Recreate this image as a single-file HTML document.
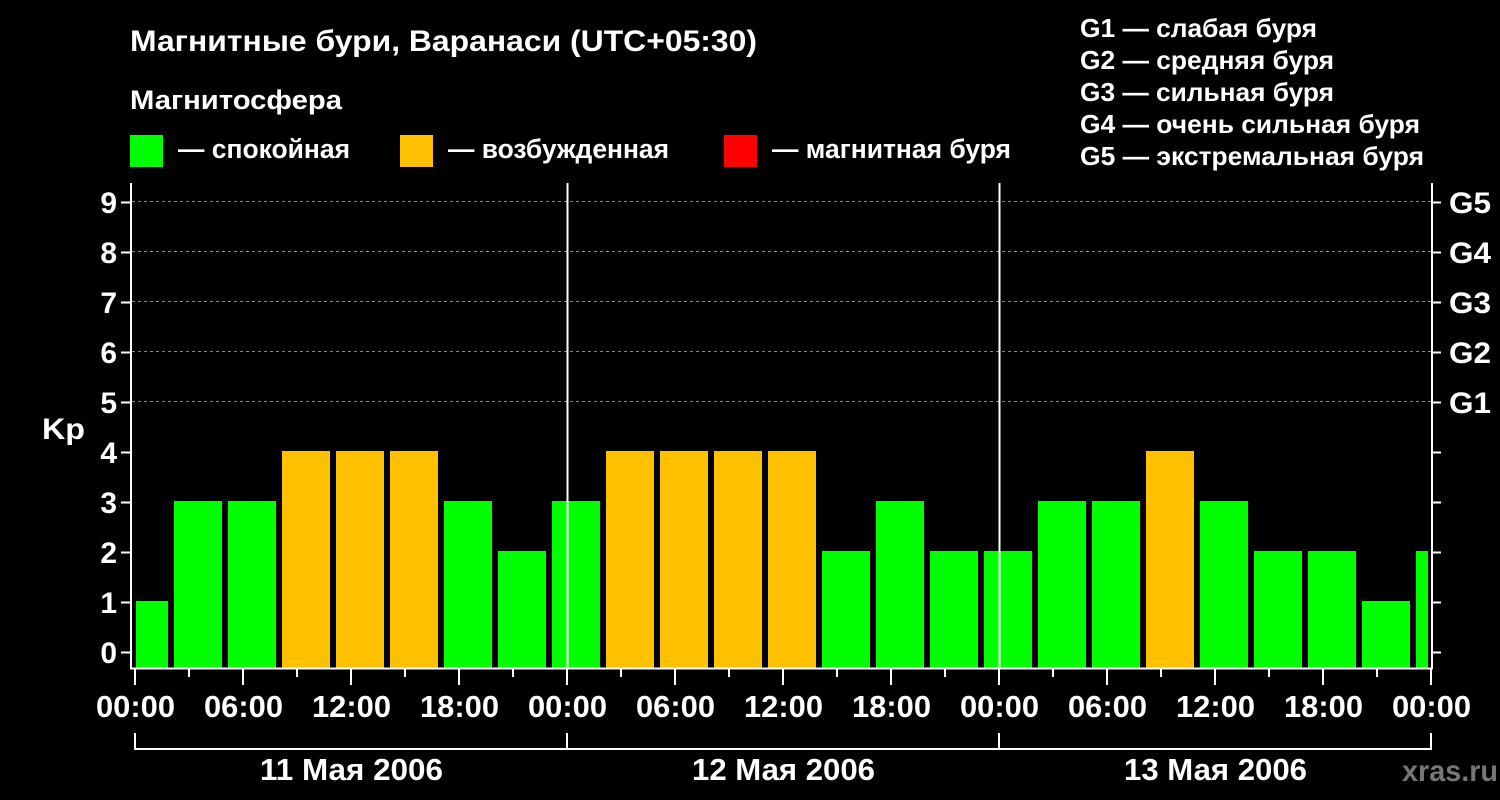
<!DOCTYPE html>
<html><head><meta charset="utf-8"><style>
html,body{margin:0;padding:0;background:#000;width:1500px;height:800px;overflow:hidden}
svg text{font-family:"Liberation Sans",Arial,sans-serif;font-weight:bold;fill:#fff}
</style></head><body>
<svg width="1500" height="800" xmlns="http://www.w3.org/2000/svg">
<rect width="1500" height="800" fill="#000"/>
<text x="130" y="51" font-size="30" textLength="627" lengthAdjust="spacingAndGlyphs">Магнитные бури, Варанаси (UTC+05:30)</text>
<text x="130" y="109" font-size="27" textLength="212" lengthAdjust="spacingAndGlyphs">Магнитосфера</text>
<rect x="130" y="135" width="33" height="32" fill="#00ff00"/>
<text x="178" y="158" font-size="27" textLength="172" lengthAdjust="spacingAndGlyphs">— спокойная</text>
<rect x="400" y="135" width="33" height="32" fill="#ffc000"/>
<text x="448" y="158" font-size="27" textLength="221" lengthAdjust="spacingAndGlyphs">— возбужденная</text>
<rect x="724" y="135" width="33" height="32" fill="#ff0000"/>
<text x="772" y="158" font-size="27" textLength="239" lengthAdjust="spacingAndGlyphs">— магнитная буря</text>
<g font-size="26">
<text x="1080" y="37" textLength="237" lengthAdjust="spacingAndGlyphs">G1 — слабая буря</text>
<text x="1080" y="69" textLength="254" lengthAdjust="spacingAndGlyphs">G2 — средняя буря</text>
<text x="1080" y="101" textLength="254" lengthAdjust="spacingAndGlyphs">G3 — сильная буря</text>
<text x="1080" y="133" textLength="340" lengthAdjust="spacingAndGlyphs">G4 — очень сильная буря</text>
<text x="1080" y="165" textLength="344" lengthAdjust="spacingAndGlyphs">G5 — экстремальная буря</text>
</g>
<g stroke="#888" stroke-width="1" stroke-dasharray="3,3">
<line x1="132" y1="201.5" x2="1432" y2="201.5"/>
<line x1="132" y1="251.5" x2="1432" y2="251.5"/>
<line x1="132" y1="301.5" x2="1432" y2="301.5"/>
<line x1="132" y1="351.5" x2="1432" y2="351.5"/>
<line x1="132" y1="401.5" x2="1432" y2="401.5"/>
</g>
<g fill="#00ff00">
<rect x="136" y="601" width="32" height="67"/>
<rect x="174" y="501" width="48" height="167"/>
<rect x="228" y="501" width="48" height="167"/>
<rect x="444" y="501" width="48" height="167"/>
<rect x="498" y="551" width="48" height="117"/>
<rect x="552" y="501" width="48" height="167"/>
<rect x="822" y="551" width="48" height="117"/>
<rect x="876" y="501" width="48" height="167"/>
<rect x="930" y="551" width="48" height="117"/>
<rect x="984" y="551" width="48" height="117"/>
<rect x="1038" y="501" width="48" height="167"/>
<rect x="1092" y="501" width="48" height="167"/>
<rect x="1200" y="501" width="48" height="167"/>
<rect x="1254" y="551" width="48" height="117"/>
<rect x="1308" y="551" width="48" height="117"/>
<rect x="1362" y="601" width="48" height="67"/>
<rect x="1416" y="551" width="12" height="117"/>
</g>
<g fill="#ffc000">
<rect x="282" y="451" width="48" height="217"/>
<rect x="336" y="451" width="48" height="217"/>
<rect x="390" y="451" width="48" height="217"/>
<rect x="606" y="451" width="48" height="217"/>
<rect x="660" y="451" width="48" height="217"/>
<rect x="714" y="451" width="48" height="217"/>
<rect x="768" y="451" width="48" height="217"/>
<rect x="1146" y="451" width="48" height="217"/>
</g>
<line x1="567.5" y1="183" x2="567.5" y2="668" stroke="#fff" stroke-width="2"/>
<line x1="999.5" y1="183" x2="999.5" y2="668" stroke="#fff" stroke-width="2"/>
<line x1="131" y1="183" x2="131" y2="669" stroke="#fff" stroke-width="2"/>
<line x1="1432" y1="183" x2="1432" y2="669" stroke="#fff" stroke-width="2"/>
<line x1="130" y1="668.5" x2="1433" y2="668.5" stroke="#fff" stroke-width="2"/>
<g stroke="#fff" stroke-width="2">
<path d="M121 202.5H131M121 252.5H131M121 302.5H131M121 352.5H131M121 402.5H131M121 452.5H131M121 502.5H131M121 552.5H131M121 602.5H131M121 652.5H131"/>
<path d="M1432 202.5H1441M1432 252.5H1441M1432 302.5H1441M1432 352.5H1441M1432 402.5H1441M1432 452.5H1441M1432 502.5H1441M1432 552.5H1441M1432 602.5H1441M1432 652.5H1441"/>
<path d="M135 669V685M243 669V685M351 669V685M459 669V685M567 669V685M675 669V685M783 669V685M891 669V685M999 669V685M1107 669V685M1215 669V685M1323 669V685M1431 669V685"/>
<path d="M189 669V677M297 669V677M405 669V677M513 669V677M621 669V677M729 669V677M837 669V677M945 669V677M1053 669V677M1161 669V677M1269 669V677M1377 669V677"/>
<path d="M135 733V749M567 733V749M999 733V749M1431 733V749M134 749H1432"/>
</g>
<g font-size="30" text-anchor="end">
<text x="117" y="213">9</text><text x="117" y="263">8</text><text x="117" y="313">7</text>
<text x="117" y="363">6</text><text x="117" y="413">5</text><text x="117" y="463">4</text>
<text x="117" y="513">3</text><text x="117" y="563">2</text><text x="117" y="613">1</text>
<text x="117" y="663">0</text>
</g>
<text x="42" y="439" font-size="30" textLength="43" lengthAdjust="spacingAndGlyphs">Kp</text>
<g font-size="30">
<text x="1449" y="213" textLength="42" lengthAdjust="spacingAndGlyphs">G5</text><text x="1449" y="263" textLength="42" lengthAdjust="spacingAndGlyphs">G4</text><text x="1449" y="313" textLength="42" lengthAdjust="spacingAndGlyphs">G3</text>
<text x="1449" y="363" textLength="42" lengthAdjust="spacingAndGlyphs">G2</text><text x="1449" y="413" textLength="42" lengthAdjust="spacingAndGlyphs">G1</text>
</g>
<g font-size="31" text-anchor="middle">
<text x="135.5" y="717" textLength="79" lengthAdjust="spacingAndGlyphs">00:00</text><text x="243.5" y="717" textLength="79" lengthAdjust="spacingAndGlyphs">06:00</text><text x="351.5" y="717" textLength="79" lengthAdjust="spacingAndGlyphs">12:00</text>
<text x="459.5" y="717" textLength="79" lengthAdjust="spacingAndGlyphs">18:00</text><text x="567.5" y="717" textLength="79" lengthAdjust="spacingAndGlyphs">00:00</text><text x="675.5" y="717" textLength="79" lengthAdjust="spacingAndGlyphs">06:00</text>
<text x="783.5" y="717" textLength="79" lengthAdjust="spacingAndGlyphs">12:00</text><text x="891.5" y="717" textLength="79" lengthAdjust="spacingAndGlyphs">18:00</text><text x="999.5" y="717" textLength="79" lengthAdjust="spacingAndGlyphs">00:00</text>
<text x="1107.5" y="717" textLength="79" lengthAdjust="spacingAndGlyphs">06:00</text><text x="1215.5" y="717" textLength="79" lengthAdjust="spacingAndGlyphs">12:00</text><text x="1323.5" y="717" textLength="79" lengthAdjust="spacingAndGlyphs">18:00</text>
<text x="1431.5" y="717" textLength="79" lengthAdjust="spacingAndGlyphs">00:00</text>
<text x="351.5" y="780" textLength="183" lengthAdjust="spacingAndGlyphs">11 Мая 2006</text>
<text x="783.5" y="780" textLength="183" lengthAdjust="spacingAndGlyphs">12 Мая 2006</text>
<text x="1215.5" y="780" textLength="183" lengthAdjust="spacingAndGlyphs">13 Мая 2006</text>
</g>
<text x="1402" y="781" font-size="30" style="fill:#777" textLength="96" lengthAdjust="spacingAndGlyphs">xras.ru</text>
</svg>
</body></html>
